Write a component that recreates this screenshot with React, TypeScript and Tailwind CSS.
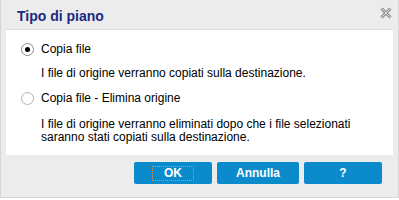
import React, { useState } from 'react';

const font = { fontFamily: '"Liberation Sans", Arial, sans-serif' };

function Radio({ checked }: { checked: boolean }) {
  return (
    <span
      className={`flex h-[13px] w-[13px] items-center justify-center rounded-full border bg-white ${
        checked ? 'border-[#8a8a8a]' : 'border-[#b4b4b4]'
      }`}
    >
      {checked && <span className="h-[5px] w-[5px] rounded-full bg-black" />}
    </span>
  );
}

export default function App() {
  const [mode, setMode] = useState('copy');

  const options = [
    {
      id: 'copy',
      label: 'Copia file',
      lines: ['I file di origine verranno copiati sulla destinazione.'],
    },
    {
      id: 'move',
      label: 'Copia file - Elimina origine',
      lines: [
        'I file di origine verranno eliminati dopo che i file selezionati',
        'saranno stati copiati sulla destinazione.',
      ],
    },
  ];

  return (
    <div
      className="flex h-[198px] w-[399px] flex-col border-x border-b border-[#d6d6d6] bg-[#ececec]"
      style={font}
    >
      {/* Title bar */}
      <div className="flex h-[29px] items-center justify-between pl-[16px] pr-[6px] pt-[3px]">
        <span className="text-[14px] font-bold text-[#1b2a7e]">Tipo di piano</span>
        <svg width="12" height="12" viewBox="0 0 12 12" className="mb-[6px]">
          <path d="M1.5 1.5 L10.5 10.5 M10.5 1.5 L1.5 10.5" stroke="#8c8c8c" strokeWidth="3" />
          <path d="M1.5 1.5 L10.5 10.5 M10.5 1.5 L1.5 10.5" stroke="#e4e4e4" strokeWidth="1" />
        </svg>
      </div>

      {/* Options panel */}
      <div className="mx-[5px] h-[126px] border-t border-[#dcdcdc] bg-white pt-[9px] text-[12px] text-black">
        {options.map((opt, i) => (
          <div key={opt.id} className={i === 0 ? 'mb-[8px]' : ''}>
            <button
              onClick={() => setMode(opt.id)}
              className="flex h-[20px] items-center gap-[7px] pl-[15px]"
            >
              <Radio checked={mode === opt.id} />
              <span>{opt.label}</span>
            </button>
            <div className={`${i === 0 ? 'mt-[8px]' : 'mt-[10px]'} pl-[35px] leading-[13px]`}>
              {opt.lines.map((l) => (
                <div key={l}>{l}</div>
              ))}
            </div>
          </div>
        ))}
      </div>

      {/* Buttons */}
      <div className="mt-[7px] flex justify-end gap-[5px] pr-[16px]">
        <button className="flex h-[22px] w-[78px] items-center justify-center rounded-[2px] bg-[#0b8bcb] text-[12px] font-bold text-white">
          <span className="flex h-[15px] w-[42px] items-center justify-center border border-dotted border-[#f08a3c]">
            OK
          </span>
        </button>
        <button className="h-[22px] w-[82px] rounded-[2px] bg-[#0b8bcb] text-[12px] font-bold text-white">
          Annulla
        </button>
        <button className="h-[22px] w-[78px] rounded-[2px] bg-[#0b8bcb] text-[12px] font-bold text-white">
          ?
        </button>
      </div>
    </div>
  );
}
